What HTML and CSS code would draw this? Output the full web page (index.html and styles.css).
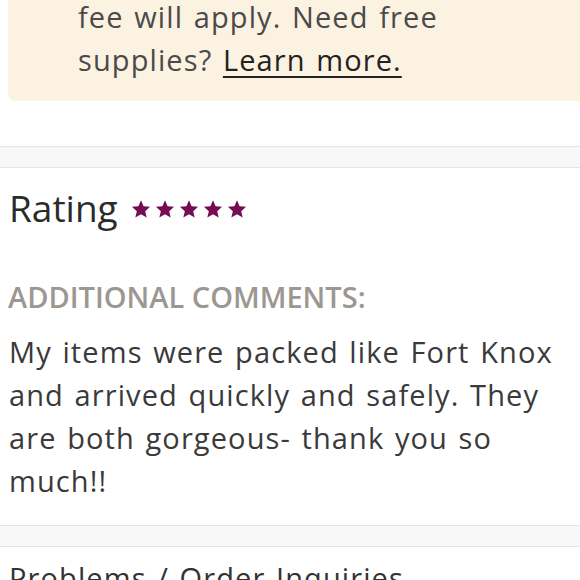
FILE: index.html
```html
<!DOCTYPE html>
<html lang="en">
<head>
<meta charset="utf-8">
<title>Review</title>
<link rel="stylesheet" href="styles.css">
</head>
<body>
  <div class="notice">
    <p class="notice-text">fee will apply. Need free<br>supplies? <a class="notice-link" href="#">Learn more.</a></p>
  </div>
  <div class="divider"></div>
  <section class="review">
    <div class="rating-row">
      <h2 class="rating-title">Rating</h2>
      <div class="stars">
        <svg class="star" viewBox="0 0 24 24"><path d="M12 1.5l3.1 7.2 7.8.7-5.9 5.2 1.8 7.7L12 18.3l-6.8 4 1.8-7.7L1.1 9.4l7.8-.7z"/></svg>
        <svg class="star" viewBox="0 0 24 24"><path d="M12 1.5l3.1 7.2 7.8.7-5.9 5.2 1.8 7.7L12 18.3l-6.8 4 1.8-7.7L1.1 9.4l7.8-.7z"/></svg>
        <svg class="star" viewBox="0 0 24 24"><path d="M12 1.5l3.1 7.2 7.8.7-5.9 5.2 1.8 7.7L12 18.3l-6.8 4 1.8-7.7L1.1 9.4l7.8-.7z"/></svg>
        <svg class="star" viewBox="0 0 24 24"><path d="M12 1.5l3.1 7.2 7.8.7-5.9 5.2 1.8 7.7L12 18.3l-6.8 4 1.8-7.7L1.1 9.4l7.8-.7z"/></svg>
        <svg class="star" viewBox="0 0 24 24"><path d="M12 1.5l3.1 7.2 7.8.7-5.9 5.2 1.8 7.7L12 18.3l-6.8 4 1.8-7.7L1.1 9.4l7.8-.7z"/></svg>
      </div>
    </div>
    <h3 class="comments-label">ADDITIONAL COMMENTS:</h3>
    <p class="comments-text">My items were packed like Fort Knox<br>and arrived quickly and safely. They<br>are both gorgeous- thank you so<br>much!!</p>
  </section>
  <div class="divider divider-bottom"></div>
  <h2 class="next-title">Problems / Order Inquiries</h2>
</body>
</html>
```
FILE: styles.css
```css
html, body {
  margin: 0;
  padding: 0;
  background: #ffffff;
}
body {
  font-family: "Open Sans", Lato, "Liberation Sans", sans-serif;
  color: #333333;
  overflow: hidden;
}
.notice {
  margin: -5px -10px 0 8px;
  padding: 0 0 20px 70px;
  background: #fcf2e1;
  border-radius: 0 0 7px 7px;
}
.notice-text {
  margin: 0;
  font-size: 29px;
  line-height: 43px;
  letter-spacing: 1.1px;
  word-spacing: 2px;
  color: #4a4a4a;
  white-space: nowrap;
}
.notice-link {
  color: #222222;
  text-decoration: underline;
  text-decoration-thickness: 2px;
  text-underline-offset: 5px;
}
.divider {
  margin-top: 45px;
  height: 20px;
  background: #f8f8f8;
  border-top: 1px solid #e4e4e4;
  border-bottom: 1px solid #e4e4e4;
}
.divider-bottom {
  margin-top: 0;
}
.review {
  padding: 18px 8px 23px 9px;
}
.rating-row {
  display: flex;
  align-items: center;
  gap: 13px;
}
.rating-title {
  margin: 0;
  font-size: 37px;
  font-weight: 400;
  line-height: 44px;
  color: #2b2b2b;
}
.stars {
  display: flex;
  gap: 4px;
  padding-top: 2px;
}
.star {
  width: 20px;
  height: 20px;
  fill: #770b53;
}
.comments-label {
  margin: 50px 0 0 -1px;
  font-size: 29px;
  font-weight: 600;
  line-height: 34px;
  color: #9d9791;
}
.comments-text {
  margin: 16px 0 0;
  font-size: 29px;
  line-height: 43px;
  letter-spacing: 1.1px;
  word-spacing: 2px;
  color: #3a3a3a;
  white-space: nowrap;
}
.next-title {
  margin: 11px 0 0 9px;
  font-size: 29px;
  font-weight: 400;
  line-height: 40px;
  letter-spacing: 1.1px;
  word-spacing: 2px;
  color: #333333;
  white-space: nowrap;
}
```
